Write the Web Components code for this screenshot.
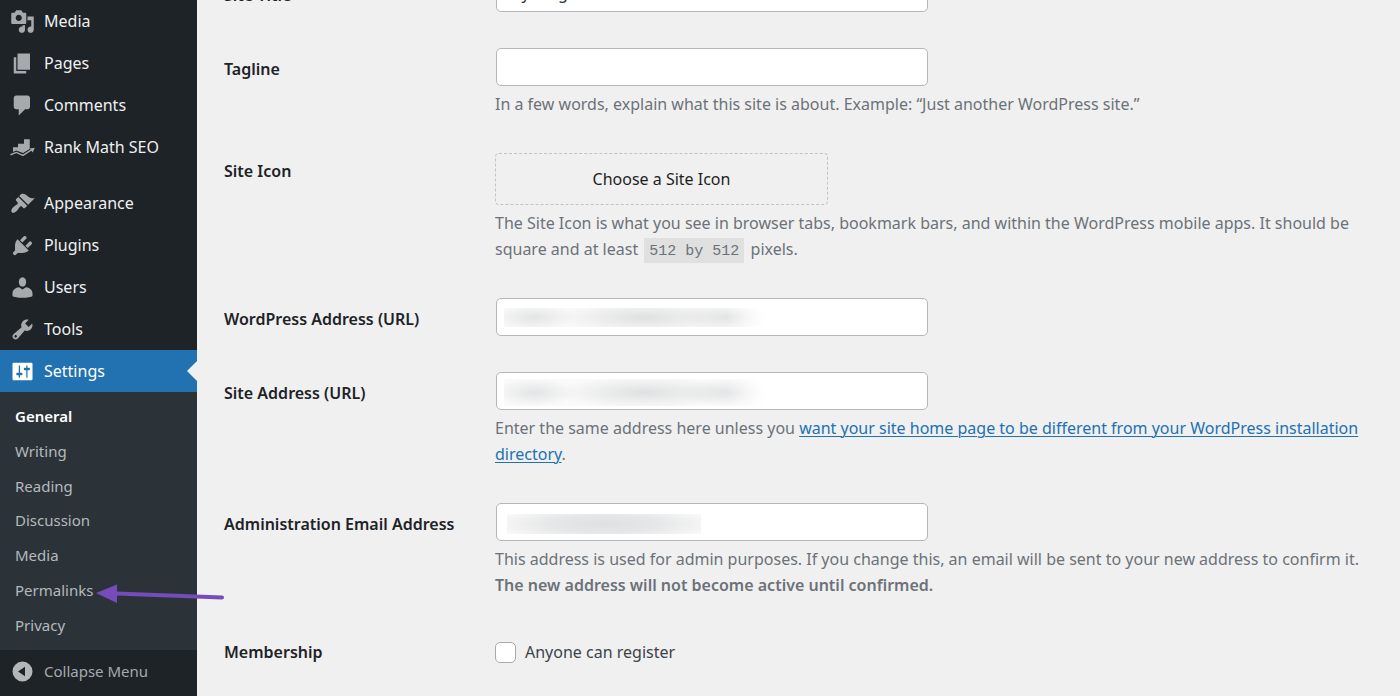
<!DOCTYPE html>
<html lang="en">
<head>
<meta charset="utf-8">
<title>General Settings</title>
<style>
  html, body { margin: 0; }
  body { background: #f0f0f0; font-family: "Noto Sans", "Open Sans", sans-serif; font-size: 16px; line-height: 26px; color: #3c434a; }
</style>
</head>
<body>
<admin-shell>
  <admin-menu slot="menu">
    <menu-item icon="media">Media</menu-item>
    <menu-item icon="page">Pages</menu-item>
    <menu-item icon="comment">Comments</menu-item>
    <menu-item icon="rank">Rank Math SEO</menu-item>
    <menu-item icon="brush" spaced>Appearance</menu-item>
    <menu-item icon="plug">Plugins</menu-item>
    <menu-item icon="user">Users</menu-item>
    <menu-item icon="wrench">Tools</menu-item>
    <menu-item icon="sliders" current>Settings</menu-item>
    <sub-menu items="General,Writing,Reading,Discussion,Media,Permalinks,Privacy"></sub-menu>
    <collapse-button>Collapse Menu</collapse-button>
  </admin-menu>
  <settings-form></settings-form>
</admin-shell>
<script>
const paths = {
  media: '<path d="M13 11V4c0-.55-.45-1-1-1h-1.67L9 1H5L3.67 3H2c-.55 0-1 .45-1 1v7c0 .55.45 1 1 1h10c.55 0 1-.45 1-1zM7 4.5c1.38 0 2.5 1.12 2.5 2.5S8.38 9.5 7 9.5 4.5 8.38 4.5 7 5.62 4.5 7 4.5zM14 6h5v10.5c0 1.38-1.12 2.5-2.5 2.5S14 17.88 14 16.5s1.12-2.5 2.5-2.5c.17 0 .34.02.5.05V9h-3V6zm-4 8.05V13h2v3.5c0 1.38-1.12 2.5-2.5 2.5S7 17.88 7 16.5 8.12 14 9.5 14c.17 0 .34.02.5.05z"/>',
  page: '<path d="M6 15V2h10v13H6zm-1 1h8v2H3V5h2v11z"/>',
  comment: '<path d="M5 2h9c1.1 0 2 .9 2 2v7c0 1.1-.9 2-2 2h-2l-5 5v-5H5c-1.1 0-2-.9-2-2V4c0-1.1.9-2 2-2z"/>',
  rank: '<path d="M2.4 9.8h4v4L5 13l-2.6 1.2zM6.4 7h4.8v7.2l-.8.2-4-1.4zM11.2 3.4h4.6v8L11.2 14z"/><path d="M.4 15.8 5 13.9l5.4 2.4 7-4.6" fill="none" stroke="#1d2327" stroke-width="2.6"/><path d="M.4 15.8 5 13.9l5.4 2.4 7-4.6" fill="none" stroke="currentColor" stroke-width="1.1"/><path d="m15.8 10.8 4-.6-1.6 3.7z"/>',
  brush: '<path d="M14.48 11.06L7.41 3.99l1.5-1.5c.5-.56 2.3-.47 3.51.32 1.21.8 1.43 1.28 2.91 2.1 1.18.64 2.45 1.26 4.45.85zm-.71.71L6.7 4.7 4.93 6.47c-.39.39-.39 1.02 0 1.41l1.06 1.06c.39.39.39 1.03 0 1.42-.6.6-1.43 1.11-2.21 1.69-.35.26-.7.53-1.01.84C1.43 14.23.4 16.08 1.4 17.07c.99 1 2.84-.03 4.18-1.36.31-.31.58-.66.85-1.02.57-.78 1.08-1.61 1.69-2.21.39-.39 1.02-.39 1.41 0l1.06 1.06c.39.39 1.02.39 1.41 0z"/>',
  plug: '<path d="M13.11 4.36L9.87 7.6 8 5.73l3.24-3.24c.35-.34 1.05-.2 1.56.32.52.51.66 1.21.31 1.55zm-8 1.77l.91-1.12 9.01 9.01-1.19.84c-.71.71-2.63 1.16-3.82 1.16H6.14L4.9 17.26c-.59.59-1.54.59-2.12 0-.59-.58-.59-1.53 0-2.12l1.24-1.24v-3.88c0-1.13.4-3.19 1.09-3.89zm7.26 3.97l3.24-3.24c.34-.35 1.04-.21 1.55.31.52.51.66 1.21.31 1.55l-3.24 3.25z"/>',
  user: '<path d="M10 9.2c-2.2 0-2.9-2.1-2.9-3.9S8.100 1.700 10 1.700s2.900 1.800 2.900 3.600S12.200 9.200 10 9.200zM10 11.600l2.800-1.900c2.800.2 5.200 2.200 5.200 5v2.100c-1 .9-4.500 1.400-8 1.400s-7-.5-8-1.400v-2.100c0-2.800 2.400-4.800 5.200-5z"/>',
  wrench: '<path d="M16.68 9.77c-1.34 1.34-3.3 1.67-4.95.99l-5.41 6.52c-.99.99-2.59.99-3.58 0s-.99-2.59 0-3.57l6.52-5.42c-.68-1.65-.35-3.61.99-4.95 1.28-1.28 3.12-1.62 4.72-1.06l-2.89 2.89 2.82 2.82 2.86-2.87c.53 1.58.18 3.39-1.08 4.65zM3.81 16.21c.4.39 1.04.39 1.43 0 .4-.4.4-1.04 0-1.43-.39-.4-1.03-.4-1.43 0-.39.39-.39 1.03 0 1.43z"/>',
  sliders: '<path d="M18 16V4c0-.55-.45-1-1-1H3c-.55 0-1 .45-1 1v12c0 .55.45 1 1 1h14c.55 0 1-.45 1-1zM8 11h1c.55 0 1 .45 1 1s-.45 1-1 1H8v1.5c0 .28-.22.5-.5.5s-.5-.22-.5-.5V13H6c-.55 0-1-.45-1-1s.45-1 1-1h1V5.5c0-.28.22-.5.5-.5s.5.22.5.5V11zm5-2h-1c-.55 0-1-.45-1-1s.45-1 1-1h1V5.5c0-.28.22-.5.5-.5s.5.22.5.5V7h1c.55 0 1 .45 1 1s-.45 1-1 1h-1v5.5c0 .28-.22.5-.5.5s-.5-.22-.5-.5V9z"/>',
  collapse: '<path fill-rule="evenodd" d="M10 2a8 8 0 1 1 0 16 8 8 0 0 1 0-16zm2 4.2L6.4 10l5.6 3.8z"/>'
};
const icon = name => `<svg viewBox="0 0 20 20" width="25" height="25" fill="currentColor" aria-hidden="true">${paths[name]}</svg>`;

const define = (tag, render) => customElements.define(tag, class extends HTMLElement {
  connectedCallback() {
    if (!this.shadowRoot) this.attachShadow({ mode: 'open' }).innerHTML = render(this);
  }
});

define('admin-shell', () => `
  <style>
    :host { display: flex; min-height: 100vh; }
    main { flex: 1; min-width: 0; padding: 0 27px; }
  </style>
  <slot name="menu"></slot>
  <main><slot></slot></main>`);

define('admin-menu', () => `
  <style>:host { display: block; flex: none; width: 197px; background: #1d2327; }</style>
  <nav aria-label="Main menu"><slot></slot></nav>`);

define('menu-item', el => `
  <style>
    :host { display: block; }
    :host([spaced]) { margin-top: 14px; }
    a { position: relative; display: flex; align-items: center; gap: 9px; height: 42px; padding-left: 10px; color: #f0f0f1; text-decoration: none; }
    svg { color: #a7aaad; flex: none; }
    :host([current]) a { background: #2271b1; color: #fff; }
    :host([current]) svg { color: #fff; }
    :host([current]) a::after { content: ""; position: absolute; right: 0; top: 11px; border: 10px solid transparent; border-left: 0; border-right-color: #f0f0f0; }
  </style>
  <a href="#">${icon(el.getAttribute('icon'))}<span><slot></slot></span></a>`);

define('sub-menu', el => `
  <style>
    :host { display: block; background: #2c3338; padding: 7px 0 8px; }
    ul { display: grid; grid-auto-rows: 1fr; height: 243px; margin: 0; padding: 0 0 0 15px; list-style: none; font-size: 15px; }
    li { position: relative; display: flex; align-items: center; }
    a { color: #b4b9be; text-decoration: none; }
    li:first-child a { color: #fff; font-weight: 600; }
    .arrow { position: absolute; left: 81px; top: 9px; z-index: 1; }
  </style>
  <ul>${el.getAttribute('items').split(',').map(t => `<li><a href="#">${t}</a>${t === 'Permalinks' ? `
    <svg class="arrow" width="132" height="24" viewBox="0 0 132 24" aria-hidden="true"><path d="M20 11.5 126 15.5" stroke="#764bbb" stroke-width="4" stroke-linecap="round"/><path d="M0 11 21 2.5v18.5z" fill="#764bbb"/></svg>` : ''}</li>`).join('')}</ul>`);

define('collapse-button', () => `
  <style>
    :host { display: block; }
    button { display: flex; align-items: center; gap: 9px; width: 100%; height: 42px; padding: 0 0 0 10px; border: 0; background: none; color: #a7aaad; font: inherit; font-size: 15px; }
    svg { color: #b4b7ba; }
  </style>
  <button type="button">${icon('collapse')}<span><slot></slot></span></button>`);

define('setting-row', el => `
  <style>
    :host { display: grid; grid-template-columns: 271px minmax(0, 1fr); }
    .name { padding-top: 8px; color: #1d2327; font-weight: 600; }
    :host([short]) .name { padding-top: 5px; }
  </style>
  <div class="name"><slot name="label"></slot></div>
  <div><slot></slot></div>`);

define('settings-form', () => `
  <style>
    :host { display: block; }
    form { display: grid; gap: 36px; margin-top: -26px; }
    .field { position: relative; width: 432px; max-width: 100%; margin-left: 1px; }
    .field input { display: block; box-sizing: border-box; width: 100%; height: 38px; padding: 0 10px; border: 1px solid #b4b6b9; border-radius: 5px; background: #fff; color: #2c3338; font: inherit; }
    .redacted { position: absolute; left: 8px; top: 10px; width: 262px; height: 19px; background:
      linear-gradient(to right, transparent 85%, #fff),
      radial-gradient(ellipse 42px 14px at 30px 50%, #e3e4e5, transparent),
      radial-gradient(ellipse 88px 16px at 140px 50%, #dfe0e1, transparent),
      radial-gradient(ellipse 50px 14px at 224px 50%, #e3e4e5, transparent), #fafafa; }
    .tall { top: 7px; height: 27px; }
    .email { left: 11px; top: 11px; width: 194px; height: 20px; background: radial-gradient(ellipse 110px 18px at 50% 50%, #dfe0e1, #e6e7e8 50%, #f8f8f8); }
    p { margin: 5px 0 0; color: #6c7278; }
    strong { font-weight: 600; }
    a { color: #2271b1; text-decoration-thickness: 1px; text-underline-offset: 2px; }
    code { margin: 0 2px; padding: 5px 5px 3px; background: #e0e0e0; font-family: "Liberation Mono", monospace; font-size: 15px; line-height: 16px; }
    .choose { display: block; box-sizing: border-box; width: 333px; height: 52px; border: 1px dashed #c3c4c7; border-radius: 4px; background: none; color: #1e1e1e; font: inherit; }
    .check { display: flex; align-items: center; gap: 9px; padding-top: 5px; }
    .check input { appearance: none; box-sizing: border-box; width: 21px; height: 21px; margin: 0; border: 1px solid #a7a9ac; border-radius: 5px; background: #fff; }
  </style>
  <form>
    <setting-row><label slot="label" for="title">Site Title</label>
      <div class="field"><input id="title" type="text" value="My Blog"></div></setting-row>
    <setting-row><label slot="label" for="tagline">Tagline</label>
      <div class="field"><input id="tagline" type="text"></div>
      <p>In a few words, explain what this site is about. Example: “Just another WordPress site.”</p></setting-row>
    <setting-row short><span slot="label">Site Icon</span>
      <button class="choose" type="button">Choose a Site Icon</button>
      <p>The Site Icon is what you see in browser tabs, bookmark bars, and within the WordPress mobile apps. It should be square and at least <code>512 by 512</code> pixels.</p></setting-row>
    <setting-row><label slot="label" for="wpurl">WordPress Address (URL)</label>
      <div class="field"><input id="wpurl" type="url"><span class="redacted"></span></div></setting-row>
    <setting-row><label slot="label" for="siteurl">Site Address (URL)</label>
      <div class="field"><input id="siteurl" type="url"><span class="redacted tall"></span></div>
      <p>Enter the same address here unless you <a href="#">want your site home page to be different from your WordPress installation directory</a>.</p></setting-row>
    <setting-row><label slot="label" for="email">Administration Email Address</label>
      <div class="field"><input id="email" type="email"><span class="redacted email"></span></div>
      <p>This address is used for admin purposes. If you change this, an email will be sent to your new address to confirm it. <strong>The new address will not become active until confirmed.</strong></p></setting-row>
    <setting-row short><span slot="label">Membership</span>
      <div class="check"><input id="register" type="checkbox"><label for="register">Anyone can register</label></div></setting-row>
  </form>`);
</script>
</body>
</html>
